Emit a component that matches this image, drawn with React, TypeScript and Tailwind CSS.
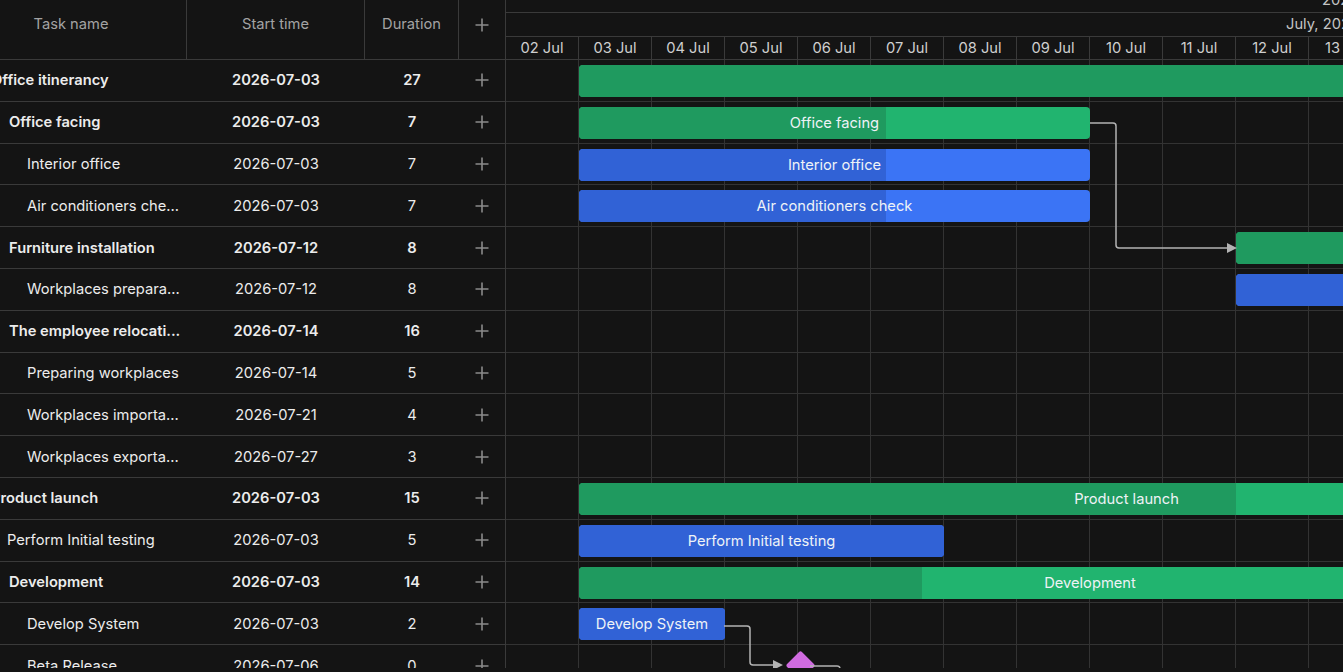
import React from 'react';

type Row = {
  name: string;
  start: string;
  duration: number;
  indent: number;
  bold?: boolean;
};

const rows: Row[] = [
  { name: 'Office itinerancy', start: '2026-07-03', duration: 27, indent: -9, bold: true },
  { name: 'Office facing', start: '2026-07-03', duration: 7, indent: 9, bold: true },
  { name: 'Interior office', start: '2026-07-03', duration: 7, indent: 27 },
  { name: 'Air conditioners che...', start: '2026-07-03', duration: 7, indent: 27 },
  { name: 'Furniture installation', start: '2026-07-12', duration: 8, indent: 9, bold: true },
  { name: 'Workplaces prepara...', start: '2026-07-12', duration: 8, indent: 27 },
  { name: 'The employee relocati...', start: '2026-07-14', duration: 16, indent: 9, bold: true },
  { name: 'Preparing workplaces', start: '2026-07-14', duration: 5, indent: 27 },
  { name: 'Workplaces importa...', start: '2026-07-21', duration: 4, indent: 27 },
  { name: 'Workplaces exporta...', start: '2026-07-27', duration: 3, indent: 27 },
  { name: 'Product launch', start: '2026-07-03', duration: 15, indent: -9, bold: true },
  { name: 'Perform Initial testing', start: '2026-07-03', duration: 5, indent: 7 },
  { name: 'Development', start: '2026-07-03', duration: 14, indent: 9, bold: true },
  { name: 'Develop System', start: '2026-07-03', duration: 2, indent: 27 },
  { name: 'Beta Release', start: '2026-07-06', duration: 0, indent: 27 },
];

const days = ['02 Jul', '03 Jul', '04 Jul', '05 Jul', '06 Jul', '07 Jul', '08 Jul', '09 Jul', '10 Jul', '11 Jul', '12 Jul', '13 Jul'];

const CELL = 73;

type Bar = {
  day: number; // offset from 02 Jul
  len: number;
  kind: 'summary' | 'task' | 'milestone' | 'none';
  progress: number;
  label?: string;
};

const bars: Bar[] = [
  { day: 1, len: 27, kind: 'summary', progress: 100 },
  { day: 1, len: 7, kind: 'summary', progress: 60, label: 'Office facing' },
  { day: 1, len: 7, kind: 'task', progress: 60, label: 'Interior office' },
  { day: 1, len: 7, kind: 'task', progress: 60, label: 'Air conditioners check' },
  { day: 10, len: 8, kind: 'summary', progress: 100 },
  { day: 10, len: 8, kind: 'task', progress: 100 },
  { day: 12, len: 16, kind: 'none', progress: 0 },
  { day: 12, len: 5, kind: 'none', progress: 0 },
  { day: 19, len: 4, kind: 'none', progress: 0 },
  { day: 25, len: 3, kind: 'none', progress: 0 },
  { day: 1, len: 15, kind: 'summary', progress: 60, label: 'Product launch' },
  { day: 1, len: 5, kind: 'task', progress: 100, label: 'Perform Initial testing' },
  { day: 1, len: 14, kind: 'summary', progress: 33.6, label: 'Development' },
  { day: 1, len: 2, kind: 'task', progress: 100, label: 'Develop System' },
  { day: 4, len: 0, kind: 'milestone', progress: 0 },
];

function Plus({ className }: { className?: string }) {
  return (
    <svg width="14" height="14" viewBox="0 0 14 14" className={className}>
      <path d="M7 0.5v13M0.5 7h13" stroke="currentColor" strokeWidth="1.6" />
    </svg>
  );
}

function GridPanel() {
  return (
    <div className="w-[506px] shrink-0 border-r border-[#3a3a3a] overflow-hidden">
      <div className="grid grid-cols-[187px_178px_94px_46px] h-[60px] border-b border-[#3a3a3a] text-[14.7px] text-[#a3a3a3]">
        <div className="flex items-center justify-center border-r border-[#3a3a3a] pr-[44px] pb-[10px]">Task name</div>
        <div className="flex items-center justify-center border-r border-[#3a3a3a] pb-[10px]">Start time</div>
        <div className="flex items-center justify-center border-r border-[#3a3a3a] pb-[10px]">Duration</div>
        <div className="flex items-center justify-center pb-[10px] text-[#8a8a8a]">
          <Plus />
        </div>
      </div>
      {rows.map((r, i) => (
        <div
          key={i}
          className={`grid grid-cols-[187px_178px_94px_46px] h-[41.8px] border-b border-[#3a3a3a] text-[14.7px] text-[#ececec] ${r.bold ? 'font-semibold' : 'font-normal'}`}
        >
          <div className="flex items-center overflow-hidden whitespace-nowrap">
            <span style={{ marginLeft: r.indent }}>{r.name}</span>
          </div>
          <div className="flex items-center justify-center">{r.start}</div>
          <div className="flex items-center justify-center">{r.duration}</div>
          <div className="flex items-center justify-center text-[#8a8a8a]">
            <Plus />
          </div>
        </div>
      ))}
    </div>
  );
}

function BarView({ b }: { b: Bar }) {
  if (b.kind === 'none') return null;
  if (b.kind === 'milestone') {
    const cx = b.day * CELL + 2;
    return (
      <div
        className="absolute w-[21px] h-[21px] bg-[#d06be0] rotate-45 rounded-[2px]"
        style={{ left: cx - 10.5, top: 10 }}
      />
    );
  }
  const dark = b.kind === 'summary' ? 'bg-[#1f9a5f]' : 'bg-[#3162d6]';
  const light = b.kind === 'summary' ? 'bg-[#21b46f]' : 'bg-[#3b74f5]';
  return (
    <div
      className={`absolute top-[5px] h-[32px] rounded-[4px] overflow-hidden ${light}`}
      style={{ left: b.day * CELL, width: b.len * CELL }}
    >
      <div className={`absolute left-0 top-0 bottom-0 ${dark}`} style={{ width: `${b.progress}%` }} />
      {b.label && (
        <div className="relative h-full flex items-center justify-center text-[14.7px] text-[#eef2f6] whitespace-nowrap">
          {b.label}
        </div>
      )}
    </div>
  );
}

function ChartPanel() {
  return (
    <div className="flex-1 min-w-0 overflow-hidden">
      <div className="h-[60px] border-b border-[#3a3a3a] overflow-hidden">
        <div className="mt-[-12px] h-[25px] border-b border-[#3a3a3a] flex items-center text-[14.7px] text-[#c4c4c4] whitespace-nowrap">
          <span className="ml-[816px]">2026</span>
        </div>
        <div className="h-[24px] border-b border-[#3a3a3a] flex items-center text-[14.7px] text-[#c4c4c4] whitespace-nowrap">
          <span className="ml-[780px]">July, 2026</span>
        </div>
        <div className="h-[23px] flex">
          {days.map((d) => (
            <div
              key={d}
              className="w-[73px] shrink-0 border-r border-[#3a3a3a] flex items-center justify-center text-[14.7px] text-[#cfcfcf]"
            >
              {d}
            </div>
          ))}
        </div>
      </div>
      <div className="relative">
        {bars.map((b, i) => (
          <div key={i} className="relative h-[41.8px] border-b border-[#333] flex">
            {days.map((d) => (
              <div key={d} className="w-[73px] shrink-0 border-r border-[#333]" />
            ))}
            <BarView b={b} />
          </div>
        ))}
        <svg className="absolute left-0 top-0 pointer-events-none" width="840" height="640">
          <g fill="none" stroke="#b3b3b3" strokeWidth="1.5">
            <path d="M584 63 H607 Q610 63 610 66 V185 Q610 188 613 188 H723" />
            <path d="M218 566 H241 Q244 566 244 569 V602 Q244 605 247 605 H269" />
            <path d="M304 606 H331 Q334 606 334 609 V640" />
          </g>
          <path d="M731 188 L721 183 L721 193 Z" fill="#b3b3b3" />
          <path d="M277 605 L267 600 L267 610 Z" fill="#b3b3b3" />
        </svg>
      </div>
    </div>
  );
}

export default function App() {
  return (
    <div className="h-[672px] overflow-hidden bg-[#141414]" style={{ fontFamily: 'Inter, "Noto Sans", sans-serif' }}>
      <div className="h-[668px] overflow-hidden flex">
        <GridPanel />
        <ChartPanel />
      </div>
    </div>
  );
}
